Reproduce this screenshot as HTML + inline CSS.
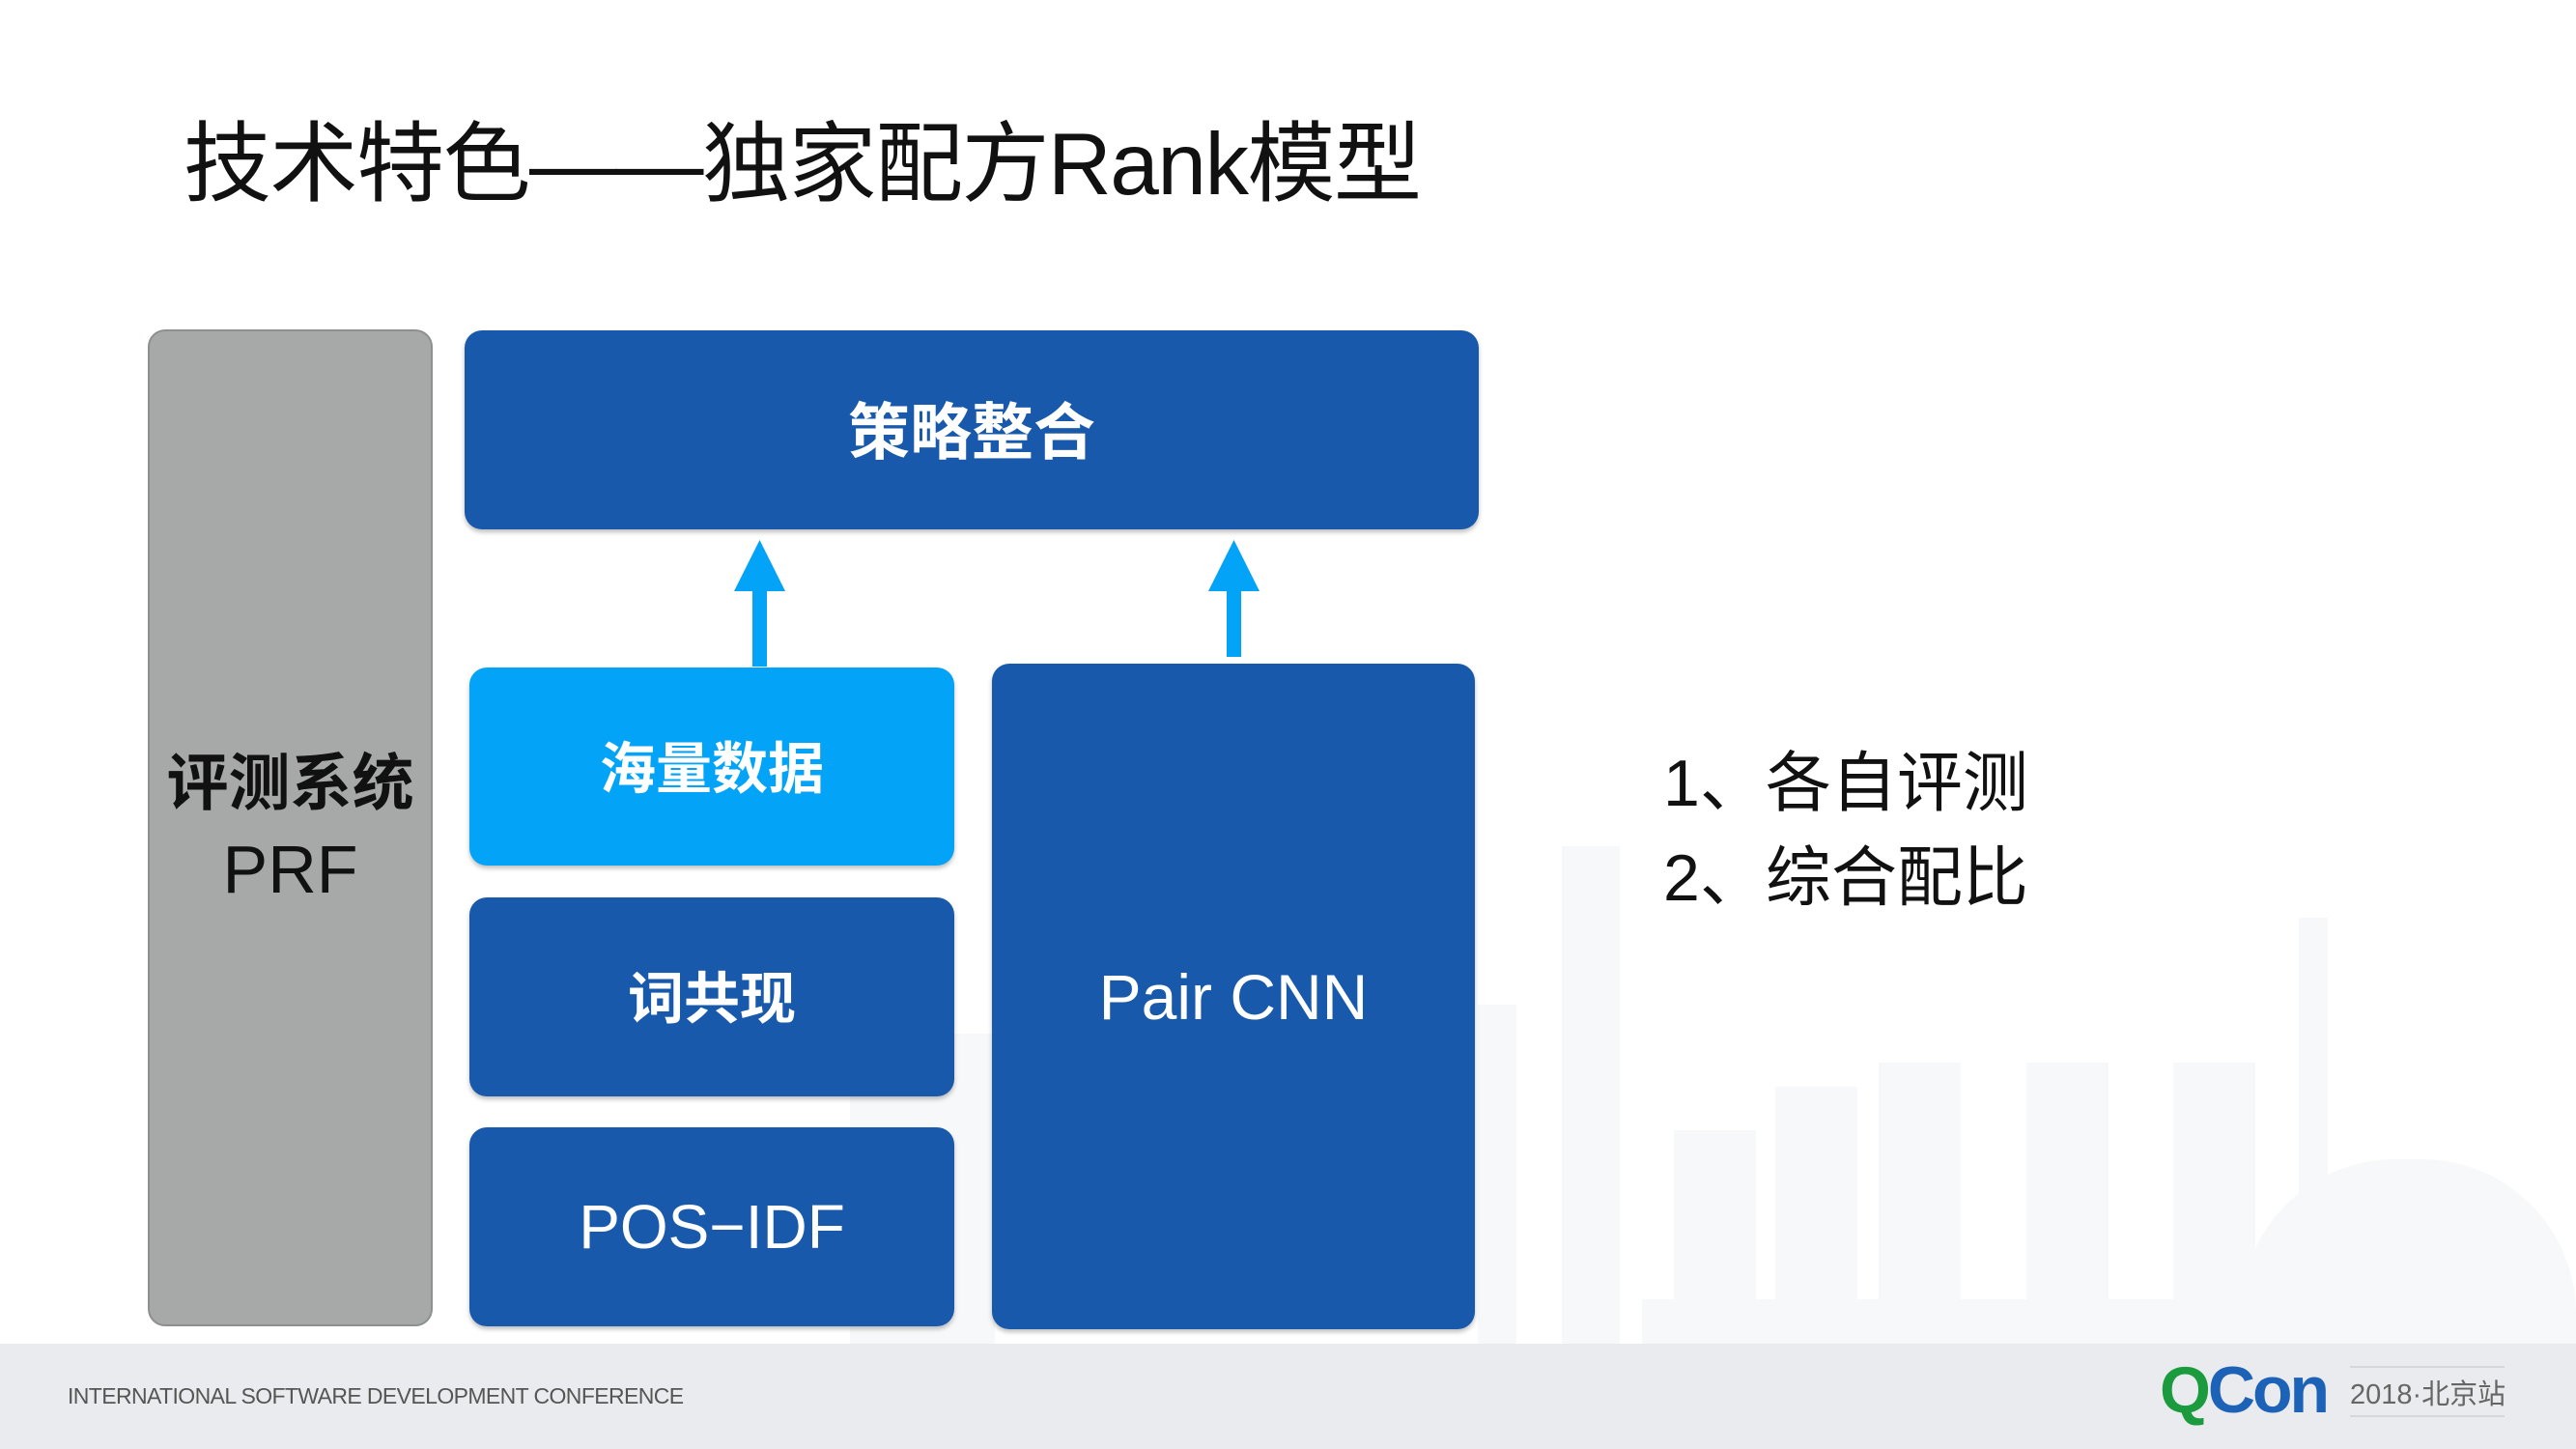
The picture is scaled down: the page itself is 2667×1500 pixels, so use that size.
<!DOCTYPE html>
<html><head><meta charset="utf-8"><style>
body{margin:0;width:2667px;height:1500px;position:relative;overflow:hidden;background:#fff;font-family:"Liberation Sans","Noto Sans CJK SC",sans-serif}
.a{position:absolute}
.box{position:absolute;border-radius:18px;color:#fff;display:flex;align-items:center;justify-content:center;box-shadow:0 3px 5px rgba(0,0,0,.25)}
.db{background:#1959ab}
.sk{position:absolute;background:#f7f8f9}
</style></head><body>
<!-- skyline -->
<div class="sk" style="left:1617px;top:876px;width:60px;height:515px"></div>
<div class="sk" style="left:1733px;top:1170px;width:85px;height:221px"></div>
<div class="sk" style="left:1838px;top:1125px;width:85px;height:266px"></div>
<div class="sk" style="left:1945px;top:1100px;width:85px;height:291px"></div>
<div class="sk" style="left:2098px;top:1100px;width:85px;height:291px"></div>
<div class="sk" style="left:2250px;top:1100px;width:85px;height:291px"></div>
<div class="sk" style="left:1700px;top:1345px;width:590px;height:46px"></div>
<div class="sk" style="left:2380px;top:950px;width:30px;height:290px"></div>
<div class="sk" style="left:2320px;top:1200px;width:347px;height:191px;border-radius:160px 160px 0 0"></div>
<div class="sk" style="left:880px;top:1070px;width:150px;height:321px"></div>
<div class="sk" style="left:1530px;top:1040px;width:40px;height:351px"></div>

<div class="a" style="left:190px;top:96px;font-size:91px;color:#111;white-space:nowrap;letter-spacing:-1.5px">技术特色——独家配方Rank模型</div>

<div class="a" style="left:153px;top:341px;width:291px;height:1028px;background:#a6a9a8;border:2px solid #8d9091;border-radius:18px;display:flex;flex-direction:column;align-items:center;justify-content:center;color:#111">
<div style="font-size:64px;font-weight:bold;line-height:86px">评测系统</div>
<div style="font-size:70px;line-height:92px">PRF</div></div>

<div class="box db" style="left:481px;top:342px;width:1050px;height:206px;font-size:64px;font-weight:bold;padding-bottom:4px;box-sizing:border-box">策略整合</div>

<svg class="a" style="left:0;top:0" width="2667" height="1500">
<path d="M779 690V610h15v80z M760 612l26.5-53 26.5 53z" fill="#03a4f8"/>
<path d="M1270 680V610h15v70z M1251 612l26.5-53 26.5 53z" fill="#03a4f8"/>
</svg>

<div class="box" style="left:486px;top:691px;width:502px;height:205px;background:#03a4f8;font-size:58px;font-weight:bold;padding-bottom:6px;box-sizing:border-box">海量数据</div>
<div class="box db" style="left:486px;top:929px;width:502px;height:206px;font-size:58px;font-weight:bold;padding-bottom:6px;box-sizing:border-box">词共现</div>
<div class="box db" style="left:486px;top:1167px;width:502px;height:206px;font-size:64px">POS−IDF</div>
<div class="box db" style="left:1027px;top:687px;width:500px;height:689px;font-size:66px">Pair CNN</div>

<div class="a" style="left:1722px;top:762px;font-size:68px;line-height:98px;color:#111">1、各自评测<br>2、综合配比</div>

<div class="a" style="left:0;top:1391px;width:2667px;height:109px;background:#e9ebee"></div>
<div class="a" style="left:70px;top:1432px;font-size:23px;color:#555;letter-spacing:-0.6px">INTERNATIONAL SOFTWARE DEVELOPMENT CONFERENCE</div>
<div class="a" style="left:2236px;top:1400px;font-size:68px;font-weight:bold;letter-spacing:-3px"><span style="color:#1b9a3e">Q</span><span style="color:#1c62b6">Con</span></div>
<div class="a" style="left:2433px;top:1414px;width:160px;border-top:2px solid #d5d7da"></div>
<div class="a" style="left:2433px;top:1465px;width:160px;border-top:2px solid #d5d7da"></div>
<div class="a" style="left:2433px;top:1420px;font-size:29px;color:#666;white-space:nowrap">2018·北京站</div>
</body></html>
